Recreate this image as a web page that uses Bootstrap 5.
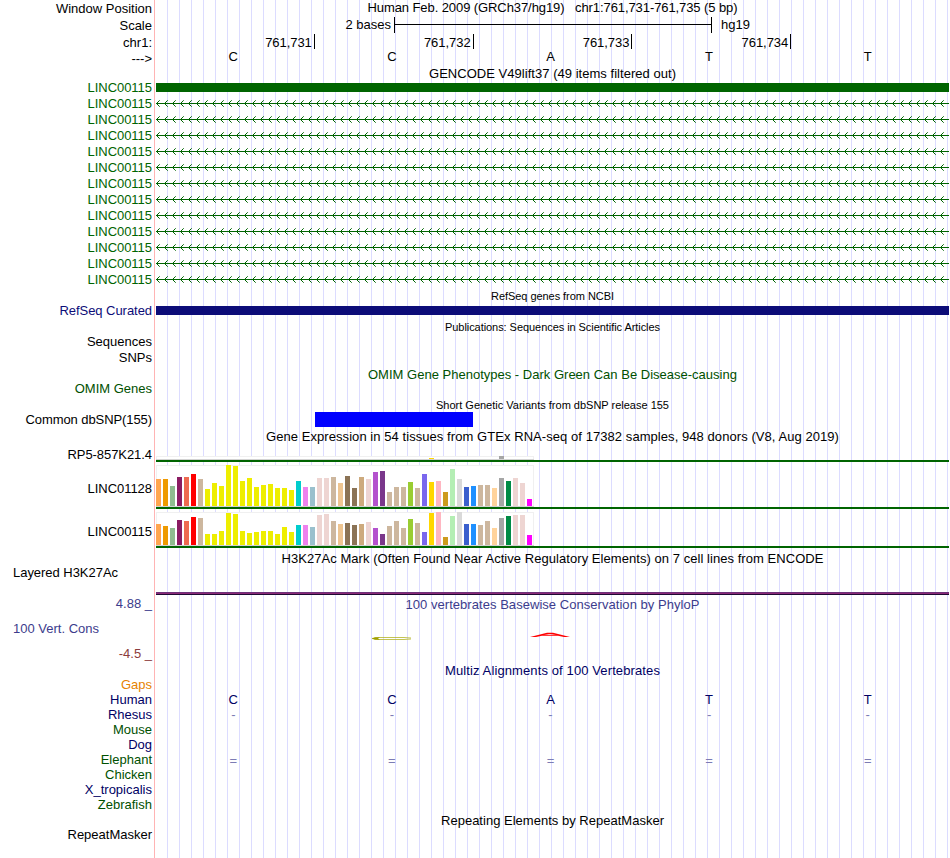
<!DOCTYPE html>
<html lang="en">
<head>
  <meta charset="UTF-8" />
  <meta name="viewport" content="width=device-width, initial-scale=1" />
  <title>Human chr1:761,731-761,735</title>
  <link href="https://cdn.jsdelivr.net/npm/bootstrap@5.3.3/dist/css/bootstrap.min.css" rel="stylesheet" />
  <style>
    body {
      font-family: "Liberation Sans", Arial, sans-serif;
      font-size: 13px;
      line-height: 16px;
      color: #000;
      background: #fff;
    }
    #browser {
      width: 949px;
      height: 858px;
      /* pink separator, white label column, then one guideline every 12px */
      background:
        linear-gradient(#ffb4b4, #ffb4b4) 154px 0 / 1px 100% no-repeat,
        linear-gradient(#fff, #fff) 0 0 / 156px 100% no-repeat,
        linear-gradient(90deg, #dcdcff 1px, transparent 1px) 167px 0 / 12px 100%;
    }
    .trk { height: 16px; }
    .trk-label {
      width: 156px;
      padding-right: 4px;
      text-align: right;
      white-space: pre;
      flex: none;
    }
    .trk-data { width: 793px; flex: none; }
    .trk-title {
      height: 15px;
      margin-left: 156px;
      padding-top: 1px;
      text-align: center;
      white-space: pre;
    }
    .trk-title.fine { font-size: 11px; padding-top: 0; }
    .trk-data svg { display: block; }
    .position { text-align: center; white-space: pre; }
    .h-line { height: 17px; }
    .species { height: 15px; }
    .bases { margin-left: -2px; width: 793px; }
    .bases > div { flex: 1 1 0; text-align: center; }
    .low-mark { padding-top: 1px; }
    .seq { margin-top: -2px; }
    .ruler { width: 793px; }
    .ruler > div { flex: 1 1 0; height: 15px; padding: 1px 2px 0 0; text-align: right; letter-spacing: -.05px; }
    .ruler > div:not(:last-child) { border-right: 1px solid #000; }
    .scale-text { width: 235px; text-align: right; }
    .gene-bar { height: 9px; margin-top: 3px; }
    .snp-bar { width: 158px; height: 15px; margin-left: 159px; background: #00f; }
    .green { color: #006400; }
    .navy { color: #0c0c78; }
    .darknavy { color: #000064; }
    .omim { color: #005000; }
    .slate { color: #3c3c8c; }
    .maroon { color: #8c3c3c; }
    .gaps { color: #e68200; }
    .align-mark { color: #7c7cb4; }
    .bg-green { background: #006400; }
    .bg-navy { background: #0c0c78; }
    .left-label { text-align: left; padding-left: 13px; }
    .gencode-title { height: 13px; padding-top: 0; margin-top: -1px; margin-bottom: 1px; }
    .gtex-0 { height: 19px; }
    .gtex-0 .trk-label { padding-top: 4px; }
    .gtex-1 { height: 47px; }
    .gtex-1 .trk-label { padding-top: 19px; }
    .gtex-2 { height: 39px; }
    .gtex-2 .trk-label { padding-top: 15px; }
    .h3k-title { height: 17px; padding-top: 3px; }
    .h3k { height: 30px; }
    .h3k-line { height: 3px; background: linear-gradient(#6e3278 1px, #8c2878 1px 2px, #1e0a32 2px); }
    .phylop { height: 67px; padding-top: 1px; }
    .phylop .trk-label { height: 66px; }
    .phylop-title { padding-top: 1px; text-align: center; }
  </style>
</head>
<body>
  <div id="browser">
    <div class="trk h-line d-flex">
      <div class="trk-label align-self-end">Window Position</div>
      <div class="trk-data position"><span data-w="370">Human Feb. 2009 (GRCh37/hg19)   chr1:761,731-761,735 (5 bp)</span></div>
    </div>
    <div class="trk h-line d-flex">
      <div class="trk-label align-self-end">Scale</div>
      <div class="trk-data d-flex">
        <div class="scale-text">2 bases</div>
        <svg width="330" height="16" shape-rendering="crispEdges">
          <path d="M3.5 0V16M320.5 0V16M3 7.5H321" stroke="#000" fill="none" />
        </svg>
        <div>hg19</div>
      </div>
    </div>
    <div class="trk h-line d-flex">
      <div class="trk-label align-self-end">chr1:</div>
      <div class="trk-data">
        <div class="ruler d-flex"><div>761,731</div><div>761,732</div><div>761,733</div><div>761,734</div><div></div></div>
      </div>
    </div>
    <div class="trk d-flex">
      <div class="trk-label">---&gt;</div>
      <div class="trk-data">
        <div class="bases seq d-flex"><div>C</div><div>C</div><div>A</div><div>T</div><div>T</div></div>
      </div>
    </div>

    <div class="trk-title gencode-title"><span data-w="247">GENCODE V49lift37 (49 items filtered out)</span></div>
    <div class="trk d-flex">
      <div class="trk-label green"><span data-w="64.5">LINC00115</span></div>
      <div class="trk-data"><div class="gene-bar bg-green"></div></div>
    </div>
    <div id="gencode-introns"></div>

    <div class="trk-title fine"><span data-w="123">RefSeq genes from NCBI</span></div>
    <div class="trk d-flex">
      <div class="trk-label navy"><span data-w="92.5">RefSeq Curated</span></div>
      <div class="trk-data"><div class="gene-bar bg-navy"></div></div>
    </div>

    <div class="trk-title fine"><span data-w="215">Publications: Sequences in Scientific Articles</span></div>
    <div class="trk d-flex"><div class="trk-label">Sequences</div></div>
    <div class="trk d-flex"><div class="trk-label">SNPs</div></div>

    <div class="trk-title omim"><span data-w="369">OMIM Gene Phenotypes - Dark Green Can Be Disease-causing</span></div>
    <div class="trk d-flex"><div class="trk-label omim">OMIM Genes</div></div>

    <div class="trk-title fine"><span data-w="233">Short Genetic Variants from dbSNP release 155</span></div>
    <div class="trk d-flex">
      <div class="trk-label"><span data-w="126.5">Common dbSNP(155)</span></div>
      <div class="trk-data"><div class="snp-bar"></div></div>
    </div>

    <div class="trk-title"><span data-w="573">Gene Expression in 54 tissues from GTEx RNA-seq of 17382 samples, 948 donors (V8, Aug 2019)</span></div>
    <div id="gtex"></div>

    <div class="trk-title h3k-title"><span data-w="542">H3K27Ac Mark (Often Found Near Active Regulatory Elements) on 7 cell lines from ENCODE</span></div>
    <div class="trk h3k d-flex">
      <div class="trk-label left-label"><span data-w="105">Layered H3K27Ac</span></div>
      <div class="trk-data align-self-end h3k-line"></div>
    </div>

    <div class="trk phylop d-flex slate">
      <div class="trk-label d-flex flex-column justify-content-between">
        <div>4.88 _</div>
        <div class="left-label">100 Vert. Cons</div>
        <div class="maroon">-4.5 _</div>
      </div>
      <div class="trk-data">
        <div class="phylop-title"><span data-w="294">100 vertebrates Basewise Conservation by PhyloP</span></div>
        <svg width="793" height="40">
          <!-- flattened base letters, C below and A above the axis -->
          <path d="M255 25L248 24.5H223L216 25.5L223 26.5H248L255 26" fill="none" stroke="#b4b428" stroke-width=".8" />
          <path d="M216 25.5L219 24.3H224L222 25.5L224 26.7H219Z" fill="#a0a000" />
          <path d="M374 23.9L391 19.8H397L414 23.9H408L402 22.8H386L380 23.9ZM388 21.9H400L395 21.2H393Z" fill="#f00" fill-rule="evenodd" />
        </svg>
      </div>
    </div>

    <div class="trk-title darknavy"><span data-w="215">Multiz Alignments of 100 Vertebrates</span></div>
    <div id="multiz"></div>

    <div class="trk-title"><span data-w="223">Repeating Elements by RepeatMasker</span></div>
    <div class="trk d-flex"><div class="trk-label"><span data-w="84.5">RepeatMasker</span></div></div>
  </div>

  <script src="https://cdn.jsdelivr.net/npm/bootstrap@5.3.3/dist/js/bootstrap.bundle.min.js"></script>
  <script>
    // intron rows, strand arrows every 8px
    let arrows = "";
    for (let x = 0; x < 793; x += 8) {
      arrows += `M${x + 3.7} 4.3L${x + 0.5} 7.5L${x + 3.7} 10.7`;
    }
    let introns = "";
    for (let i = 0; i < 12; i++) {
      introns += `
        <div class="trk d-flex">
          <div class="trk-label green"><span data-w="64.5">LINC00115</span></div>
          <div class="trk-data">
            <svg width="793" height="16">
              <path d="M0 7.5H793" stroke="#006400" shape-rendering="crispEdges" />
              <path d="${arrows}" stroke="#006400" fill="none" />
            </svg>
          </div>
        </div>`;
    }
    document.getElementById("gencode-introns").innerHTML = introns;

    // one colour per GTEx tissue
    const tissueColors = [
      "#FFA54F", "#EE9A00", "#8FBC8F", "#8B1C62", "#EE6A50", "#FF0000", "#CDB79E",
      ...Array(13).fill("#EEEE00"),
      "#00CDCD", "#EE82EE", "#9AC0CD", "#EED5D2", "#EED5D2", "#CDB79E", "#EEC591",
      "#8B7355", "#8B7355", "#CDAA7D", "#EED5D2", "#B452CD", "#7A378B", "#CDB79E",
      "#CDB79E", "#CDB79E", "#9ACD32", "#CDB79E", "#7A67EE", "#FFD700", "#FFB6C1",
      "#CD9B1D", "#B4EEB4", "#D9D9D9", "#3A5FCD", "#1E90FF", "#CDB79E", "#CDB79E",
      "#FFD39B", "#A6A6A6", "#008B45", "#EED5D2", "#EED5D2", "#FF00FF"
    ];
    const low = Array(54).fill(0);
    low[39] = 1;
    low[49] = 3;
    const genes = [
      { name: "RP5-857K21.4", width: 84.5, height: 19, top: 13, values: low },
      { name: "LINC01128", width: 64.5, height: 47, top: 3, values: [
        27,27,20,29,29,32,27,17,23,20,41,40,25,28,19,21,22,18,18,16,25,19,19,28,28,29,23,
        30,18,29,27,34,35,14,19,19,24,18,32,24,25,14,37,27,19,20,21,21,18,28,25,28,23,7] },
      { name: "LINC00115", width: 64.5, height: 39, top: 3, values: [
        21,19,17,25,24,28,27,11,11,14,32,31,14,12,13,14,14,11,18,13,20,20,18,30,31,24,21,
        22,20,21,23,17,11,19,24,17,26,22,13,32,33,8,29,33,21,21,20,24,17,27,29,30,30,10] }
    ];
    document.getElementById("gtex").innerHTML = genes.map((g, n) => {
      const base = g.height - 3;
      const bars = g.values.map((v, i) =>
        `<rect x="${i * 7}" y="${base - v}" width="5" height="${v}" fill="${tissueColors[i]}" />`).join("");
      return `
        <div class="trk gtex-${n} d-flex">
          <div class="trk-label"><span data-w="${g.width}">${g.name}</span></div>
          <div class="trk-data">
            <svg width="793" height="${g.height}" shape-rendering="crispEdges">
              <rect x="0.5" y="${g.top + 0.5}" width="377" height="${base - g.top}" fill="#fff" stroke="#f0f0f0" />
              <rect x="0" y="${base}" width="378" height="1" fill="#d2d2d2" />
              ${bars}
              <rect x="0" y="${base + 1}" width="793" height="2" fill="#006400" />
            </svg>
          </div>
        </div>`;
    }).join("");

    const species = [
      ["Gaps", "gaps", ""],
      ["Human", "darknavy", "CCATT"],
      ["Rhesus", "darknavy", "-----"],
      ["Mouse", "omim", ""],
      ["Dog", "darknavy", ""],
      ["Elephant", "omim", "====="],
      ["Chicken", "omim", ""],
      ["X_tropicalis", "darknavy", ""],
      ["Zebrafish", "omim", ""]
    ];
    const markClass = { Human: "darknavy", Rhesus: "align-mark", Elephant: "align-mark low-mark" };
    document.getElementById("multiz").innerHTML = species.map(([name, color, seq]) => `
      <div class="trk species d-flex">
        <div class="trk-label ${color}">${name}</div>
        <div class="trk-data">
          <div class="bases d-flex ${markClass[name] || ""}">
            ${[...seq].map(c => `<div>${c}</div>`).join("")}
          </div>
        </div>
      </div>`).join("");

    // spread the titles and long labels to their drawn width
    document.querySelectorAll("[data-w]").forEach(el => {
      const extra = el.dataset.w - el.getBoundingClientRect().width;
      el.style.letterSpacing = extra / el.textContent.length + "px";
    });
  </script>
</body>
</html>
